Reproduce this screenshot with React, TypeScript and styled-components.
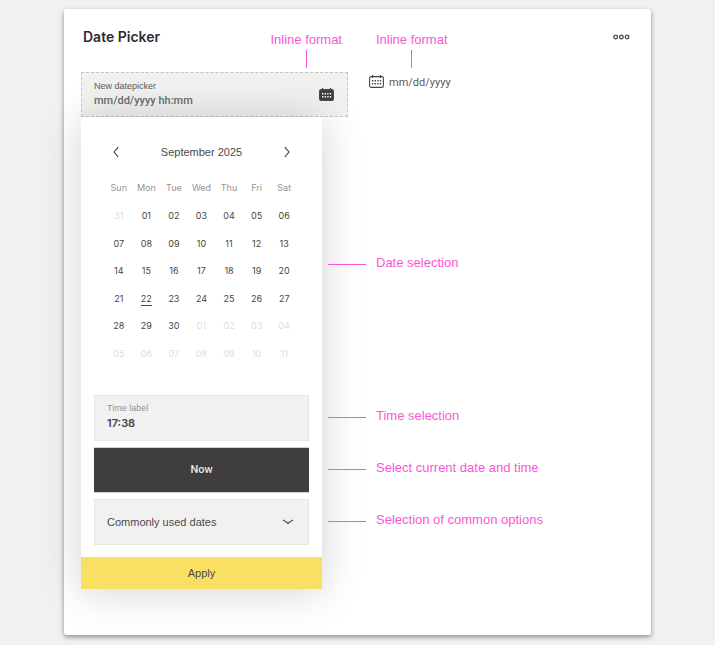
import React from 'react';
import styled, { createGlobalStyle, css } from 'styled-components';

const GlobalStyle = createGlobalStyle`
  * { box-sizing: border-box; }
  body {
    margin: 0;
    background: #f1f1f1;
    color: #4a4a49;
    font-family: "Liberation Sans", Arial, sans-serif;
    font-size: 11px;
  }
  button, input, select { font: inherit; color: inherit; }
`;

const pink = '#f957d6';

const Page = styled.main`
  padding: 9px 64px 10px;
`;

const Card = styled.section`
  padding: 18px 17px 46px;
  background: #fff;
  border-radius: 3px;
  box-shadow: 0 2px 5px rgba(0, 0, 0, 0.42);
`;

const columns = css`
  display: grid;
  grid-template-columns: 267px 1fr;
  column-gap: 21px;
`;

const Header = styled.header`
  ${columns}
  height: 45px;
`;

const HeaderSide = styled.div`
  display: flex;
  justify-content: space-between;
  align-items: flex-start;
  padding: 0 6px 0 2px;
`;

const HeaderEnd = styled(HeaderSide)`
  padding: 0 4px 0 7px;
`;

const Title = styled.h1`
  margin: 0;
  color: #2c2c30;
  font: 600 14px/20px Inter, sans-serif;
`;

const Pointer = styled.div`
  display: flex;
  flex-direction: column;
  align-items: center;
  padding-top: 3px;
  color: ${pink};
  font-size: 13px;
  line-height: 20px;
  &::after {
    content: '';
    width: 1px;
    height: 18px;
    background: ${pink};
  }
`;

const MenuButton = styled.button`
  display: flex;
  margin-top: 7px;
  padding: 0;
  border: 0;
  background: none;
  color: #4a4a4d;
`;

const Fields = styled.div`
  ${columns}
`;

const DateField = styled.div`
  display: flex;
  align-items: center;
  justify-content: space-between;
  height: 45px;
  padding: 0 13px 0 12px;
  border: 1px dashed #c4c4c4;
  background: #f1f1f1;
`;

const FieldText = styled.label`
  display: flex;
  flex-direction: column;
  padding-bottom: 2px;
  color: #5c5c5c;
  font-size: 9px;
  line-height: 14px;
`;

const DateInput = styled.input`
  width: 180px;
  height: 16px;
  padding: 0;
  border: 0;
  background: none;
  font: 500 11px/16px Roboto, sans-serif;
  &::placeholder { color: #6c6c6c; opacity: 1; }
`;

const InlineField = styled.label`
  display: flex;
  align-items: center;
  gap: 5px;
  height: 18px;
`;

const InlineInput = styled.input`
  width: 100px;
  height: 18px;
  padding: 2px 0 0;
  border: 0;
  background: none;
  font: 11px/16px Roboto, sans-serif;
  &::placeholder { color: #5c5c5c; opacity: 1; }
`;

const Body = styled.div`
  display: grid;
  grid-template-columns: 241px 1fr;
  column-gap: 6px;
`;

const Popup = styled.form`
  background: #fff;
  box-shadow: 0 2px 40px rgba(0, 0, 0, 0.18);
`;

const Calendar = styled.div`
  height: 278px;
  padding: 25px 24px 0;
`;

const MonthBar = styled.div`
  display: flex;
  align-items: center;
  justify-content: space-between;
  height: 20px;
  margin-bottom: 12px;
  padding: 0 5px;
  line-height: 20px;
`;

const StepButton = styled.button`
  display: flex;
  padding: 2px;
  border: 0;
  background: none;
`;

const Month = styled.table`
  width: 100%;
  table-layout: fixed;
  border-collapse: collapse;
  font: 9px/14px Inter, sans-serif;
  th, td {
    height: 28px;
    padding: 0;
    text-align: center;
    vertical-align: middle;
  }
  tr:nth-child(even) td {
    height: 27px;
  }
  th {
    color: #939393;
    font-weight: 400;
  }
`;

const Day = styled.button<{ $outside?: boolean; $today?: boolean }>`
  display: inline-block;
  height: 14px;
  padding: 0;
  border: 0;
  border-bottom: 1px solid ${p => (p.$today ? '#4a4a49' : 'transparent')};
  background: none;
  color: ${p => (p.$outside ? '#dedede' : '#454545')};
  line-height: 13px;
  vertical-align: middle;
`;

const Controls = styled.div`
  display: flex;
  flex-direction: column;
  gap: 6px;
  padding: 0 13px 12px;
`;

const box = css`
  height: 46px;
  border: 1px solid #e6e6e6;
  background: #f1f1f1;
`;

const TimeBox = styled.label`
  ${box}
  display: flex;
  flex-direction: column;
  padding: 5px 12px;
  color: #949494;
  font-size: 9px;
  line-height: 15px;
`;

const TimeInput = styled.input`
  width: 100%;
  height: 15px;
  padding: 0;
  border: 0;
  background: none;
  color: #454545;
  font: 600 11px/15px Inter, sans-serif;
`;

const NowButton = styled.button`
  height: 46px;
  border: 1px solid #d0d0d0;
  border-width: 1px 0;
  background: #3f3e3c;
  color: #e6e6e6;
  font: 500 11px/16px Roboto, sans-serif;
`;

const SelectBox = styled.div`
  ${box}
  display: grid;
  align-items: center;
  svg {
    grid-area: 1 / 1;
    justify-self: end;
    margin-right: 14px;
    pointer-events: none;
  }
`;

const Options = styled.select`
  grid-area: 1 / 1;
  width: 100%;
  height: 100%;
  padding: 0 12px;
  border: 0;
  appearance: none;
  background: none;
`;

const Apply = styled.button`
  display: block;
  width: 100%;
  height: 32px;
  border: 0;
  background: #fae062;
`;

const Notes = styled.ul`
  display: grid;
  grid-template-rows: 264px 46px 46px 46px;
  row-gap: 6px;
  margin: 0;
  padding: 0;
  list-style: none;
`;

const Note = styled.li`
  display: flex;
  align-items: center;
  gap: 10px;
  padding: 13px 0 2px;
  color: ${pink};
  font-size: 13px;
  line-height: 20px;
  &:first-child {
    padding-top: 29px;
  }
  &::before {
    content: '';
    width: 38px;
    height: 1px;
    margin-top: 3px;
    background: ${pink};
  }
`;

function CalendarIcon({ filled }: { filled?: boolean }) {
  const dot = filled ? '#fff' : '#4a4a49';
  return (
    <svg width="15" height="13" viewBox="0 0 15 13" aria-hidden="true">
      <rect x="0.6" y="1.6" width="13.8" height="10.8" rx="1.5" fill={filled ? '#3f3e3c' : 'none'} stroke="#4a4a49" strokeWidth="1.1" />
      <path d="M3.5 0v3M11.5 0v3" stroke="#4a4a49" strokeWidth="1.3" />
      {[5, 8].map(y => [3, 5.6, 8.2, 10.8].map(x => (
        <rect key={`${x}-${y}`} x={x} y={y} width="1.4" height="1.5" fill={dot} />
      )))}
    </svg>
  );
}

function Chevron({ d, width, height }: { d: string; width: number; height: number }) {
  return (
    <svg width={width} height={height} viewBox={`0 0 ${width} ${height}`} fill="none" stroke="#4a4a49" strokeWidth="1.2" aria-hidden="true">
      <path d={d} />
    </svg>
  );
}

const weekdays = ['Sun', 'Mon', 'Tue', 'Wed', 'Thu', 'Fri', 'Sat'];
const days = Array.from({ length: 42 }, (_, i) => {
  const day = i === 0 ? 31 : i > 30 ? i - 30 : i;
  return { label: String(day).padStart(2, '0'), outside: i === 0 || i > 30, today: i === 22 };
});
const weeks = Array.from({ length: 6 }, (_, w) => days.slice(w * 7, w * 7 + 7));
const notes = ['Date selection', 'Time selection', 'Select current date and time', 'Selection of common options'];

export default function App() {
  return (
    <Page>
      <GlobalStyle />
      <Card>
        <Header>
          <HeaderSide>
            <Title>Date Picker</Title>
            <Pointer>Inline format</Pointer>
          </HeaderSide>
          <HeaderEnd>
            <Pointer>Inline format</Pointer>
            <MenuButton type="button" aria-label="More options">
              <svg width="17" height="6" viewBox="0 0 17 6" fill="none" stroke="currentColor" strokeWidth="1.3">
                <circle cx="2.7" cy="3" r="1.8" />
                <circle cx="8.4" cy="3" r="1.8" />
                <circle cx="14.1" cy="3" r="1.8" />
              </svg>
            </MenuButton>
          </HeaderEnd>
        </Header>
        <Fields>
          <DateField>
            <FieldText>
              New datepicker
              <DateInput placeholder="mm/dd/yyyy hh:mm" />
            </FieldText>
            <CalendarIcon filled />
          </DateField>
          <InlineField>
            <CalendarIcon />
            <InlineInput placeholder="mm/dd/yyyy" aria-label="Date" />
          </InlineField>
        </Fields>
        <Body>
          <Popup onSubmit={e => e.preventDefault()}>
            <Calendar>
              <MonthBar>
                <StepButton type="button" aria-label="Previous month">
                  <Chevron d="M6 1C5 3.5 3 4.5 2 6C3 7.5 5 8.5 6 11" width={8} height={12} />
                </StepButton>
                <span>September 2025</span>
                <StepButton type="button" aria-label="Next month">
                  <Chevron d="M2 1C3 3.5 5 4.5 6 6C5 7.5 3 8.5 2 11" width={8} height={12} />
                </StepButton>
              </MonthBar>
              <Month>
                <thead>
                  <tr>{weekdays.map(d => <th key={d} scope="col">{d}</th>)}</tr>
                </thead>
                <tbody>
                  {weeks.map((week, w) => (
                    <tr key={w}>
                      {week.map((d, i) => (
                        <td key={i}>
                          <Day type="button" $outside={d.outside} $today={d.today}>{d.label}</Day>
                        </td>
                      ))}
                    </tr>
                  ))}
                </tbody>
              </Month>
            </Calendar>
            <Controls>
              <TimeBox>
                Time label
                <TimeInput defaultValue="17:38" />
              </TimeBox>
              <NowButton type="button">Now</NowButton>
              <SelectBox>
                <Options aria-label="Commonly used dates">
                  <option>Commonly used dates</option>
                </Options>
                <Chevron d="M1 1C3 2 4.5 3 6 4.5C7.5 3 9 2 11 1" width={12} height={6} />
              </SelectBox>
            </Controls>
            <Apply type="submit">Apply</Apply>
          </Popup>
          <Notes>
            {notes.map(n => <Note key={n}>{n}</Note>)}
          </Notes>
        </Body>
      </Card>
    </Page>
  );
}
